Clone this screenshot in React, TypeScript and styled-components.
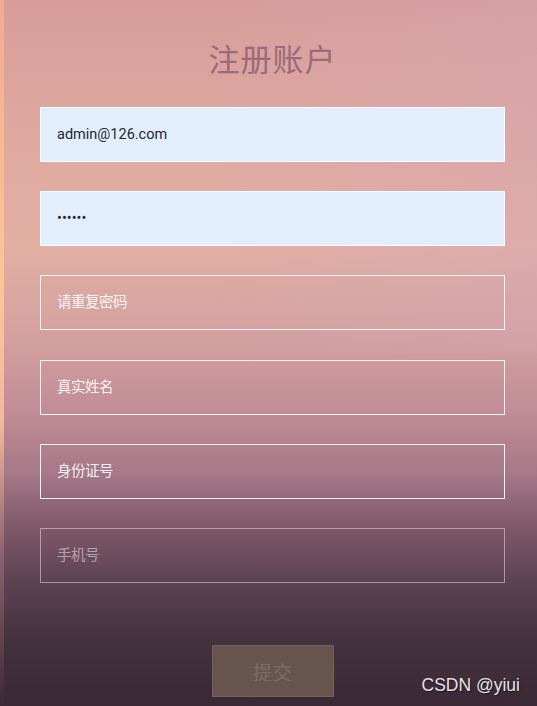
import React from 'react';
import styled, { createGlobalStyle } from 'styled-components';

const GlobalStyle = createGlobalStyle`
  html, body {
    margin: 0;
    padding: 0;
    height: 706px;
    overflow: hidden;
  }
  body {
    font-family: Roboto, "Noto Sans CJK SC", sans-serif;
  }
`;

const Page = styled.div`
  position: relative;
  height: 706px;
  box-sizing: border-box;
  padding: 36px 32px 0 40px;
  background:
    linear-gradient(to bottom, #eeac92 0%, #ffc498 40%, #f2b8a0 60%, #8e6470 78%, #3c2a36 100%) no-repeat 0 0 / 4px 100%,
    linear-gradient(to right, rgba(215, 160, 175, 0) 40%, rgba(212, 165, 185, 0.35) 100%) no-repeat 0 0 / 100% 50%,
    linear-gradient(
      to bottom,
      #d89d9a 0%,
      #dfa9a0 20%,
      #e2afa3 35%,
      #d3a09f 48%,
      #c28d97 58%,
      #a67888 67%,
      #7d5868 75%,
      #5a4150 83%,
      #44313e 91%,
      #3a2935 100%
    );
`;

const Title = styled.h1`
  margin: 0 0 27px;
  text-align: center;
  font-family: "Noto Sans CJK SC", sans-serif;
  font-size: 31px;
  font-weight: 400;
  line-height: 44px;
  letter-spacing: 1px;
  color: #9c6a7c;
`;

const Form = styled.form`
  display: flex;
  flex-direction: column;
  gap: 29.2px;
  width: 465px;
`;

const Field = styled.input<{ $filled?: boolean; $dim?: boolean }>`
  box-sizing: border-box;
  width: 100%;
  height: 55px;
  padding: 0 16px;
  border: 1px solid ${(p) => (p.$dim ? 'rgba(220, 210, 215, 0.6)' : 'rgba(255, 255, 255, 0.9)')};
  background: ${(p) => (p.$filled ? '#e3eefc' : 'transparent')};
  color: #26262e;
  font-family: Roboto, "Noto Sans CJK SC", sans-serif;
  font-size: 14.5px;
  outline: none;
  &::placeholder {
    color: ${(p) => (p.$dim ? 'rgba(225, 210, 218, 0.65)' : 'rgba(255, 255, 255, 0.92)')};
    font-family: "Noto Sans CJK SC", sans-serif;
    font-size: 14.5px;
    letter-spacing: -0.5px;
  }
`;

const Submit = styled.button`
  align-self: center;
  width: 122px;
  height: 52px;
  margin: 33px 0 0 1px;
  border: 1px solid rgba(130, 105, 95, 0.6);
  background: #67544e;
  color: #7c6c66;
  font-family: "Noto Sans CJK SC", sans-serif;
  font-size: 19px;
  letter-spacing: 1px;
`;

const Watermark = styled.span`
  position: absolute;
  right: 17px;
  bottom: 10px;
  font-family: "Liberation Sans", Arial, sans-serif;
  font-size: 17.5px;
  color: #e6e2e6;
  text-shadow: 1px 1px 1px rgba(0, 0, 0, 0.55);
`;

function App() {
  return (
    <Page>
      <GlobalStyle />
      <Title>注册账户</Title>
      <Form onSubmit={(e) => e.preventDefault()}>
        <Field $filled type="text" defaultValue="admin@126.com" readOnly />
        <Field $filled type="password" defaultValue="123456" readOnly />
        <Field type="password" placeholder="请重复密码" />
        <Field type="text" placeholder="真实姓名" />
        <Field type="text" placeholder="身份证号" />
        <Field $dim type="text" placeholder="手机号" />
        <Submit type="submit">提交</Submit>
      </Form>
      <Watermark>CSDN @yiui</Watermark>
    </Page>
  );
}

export default App;
